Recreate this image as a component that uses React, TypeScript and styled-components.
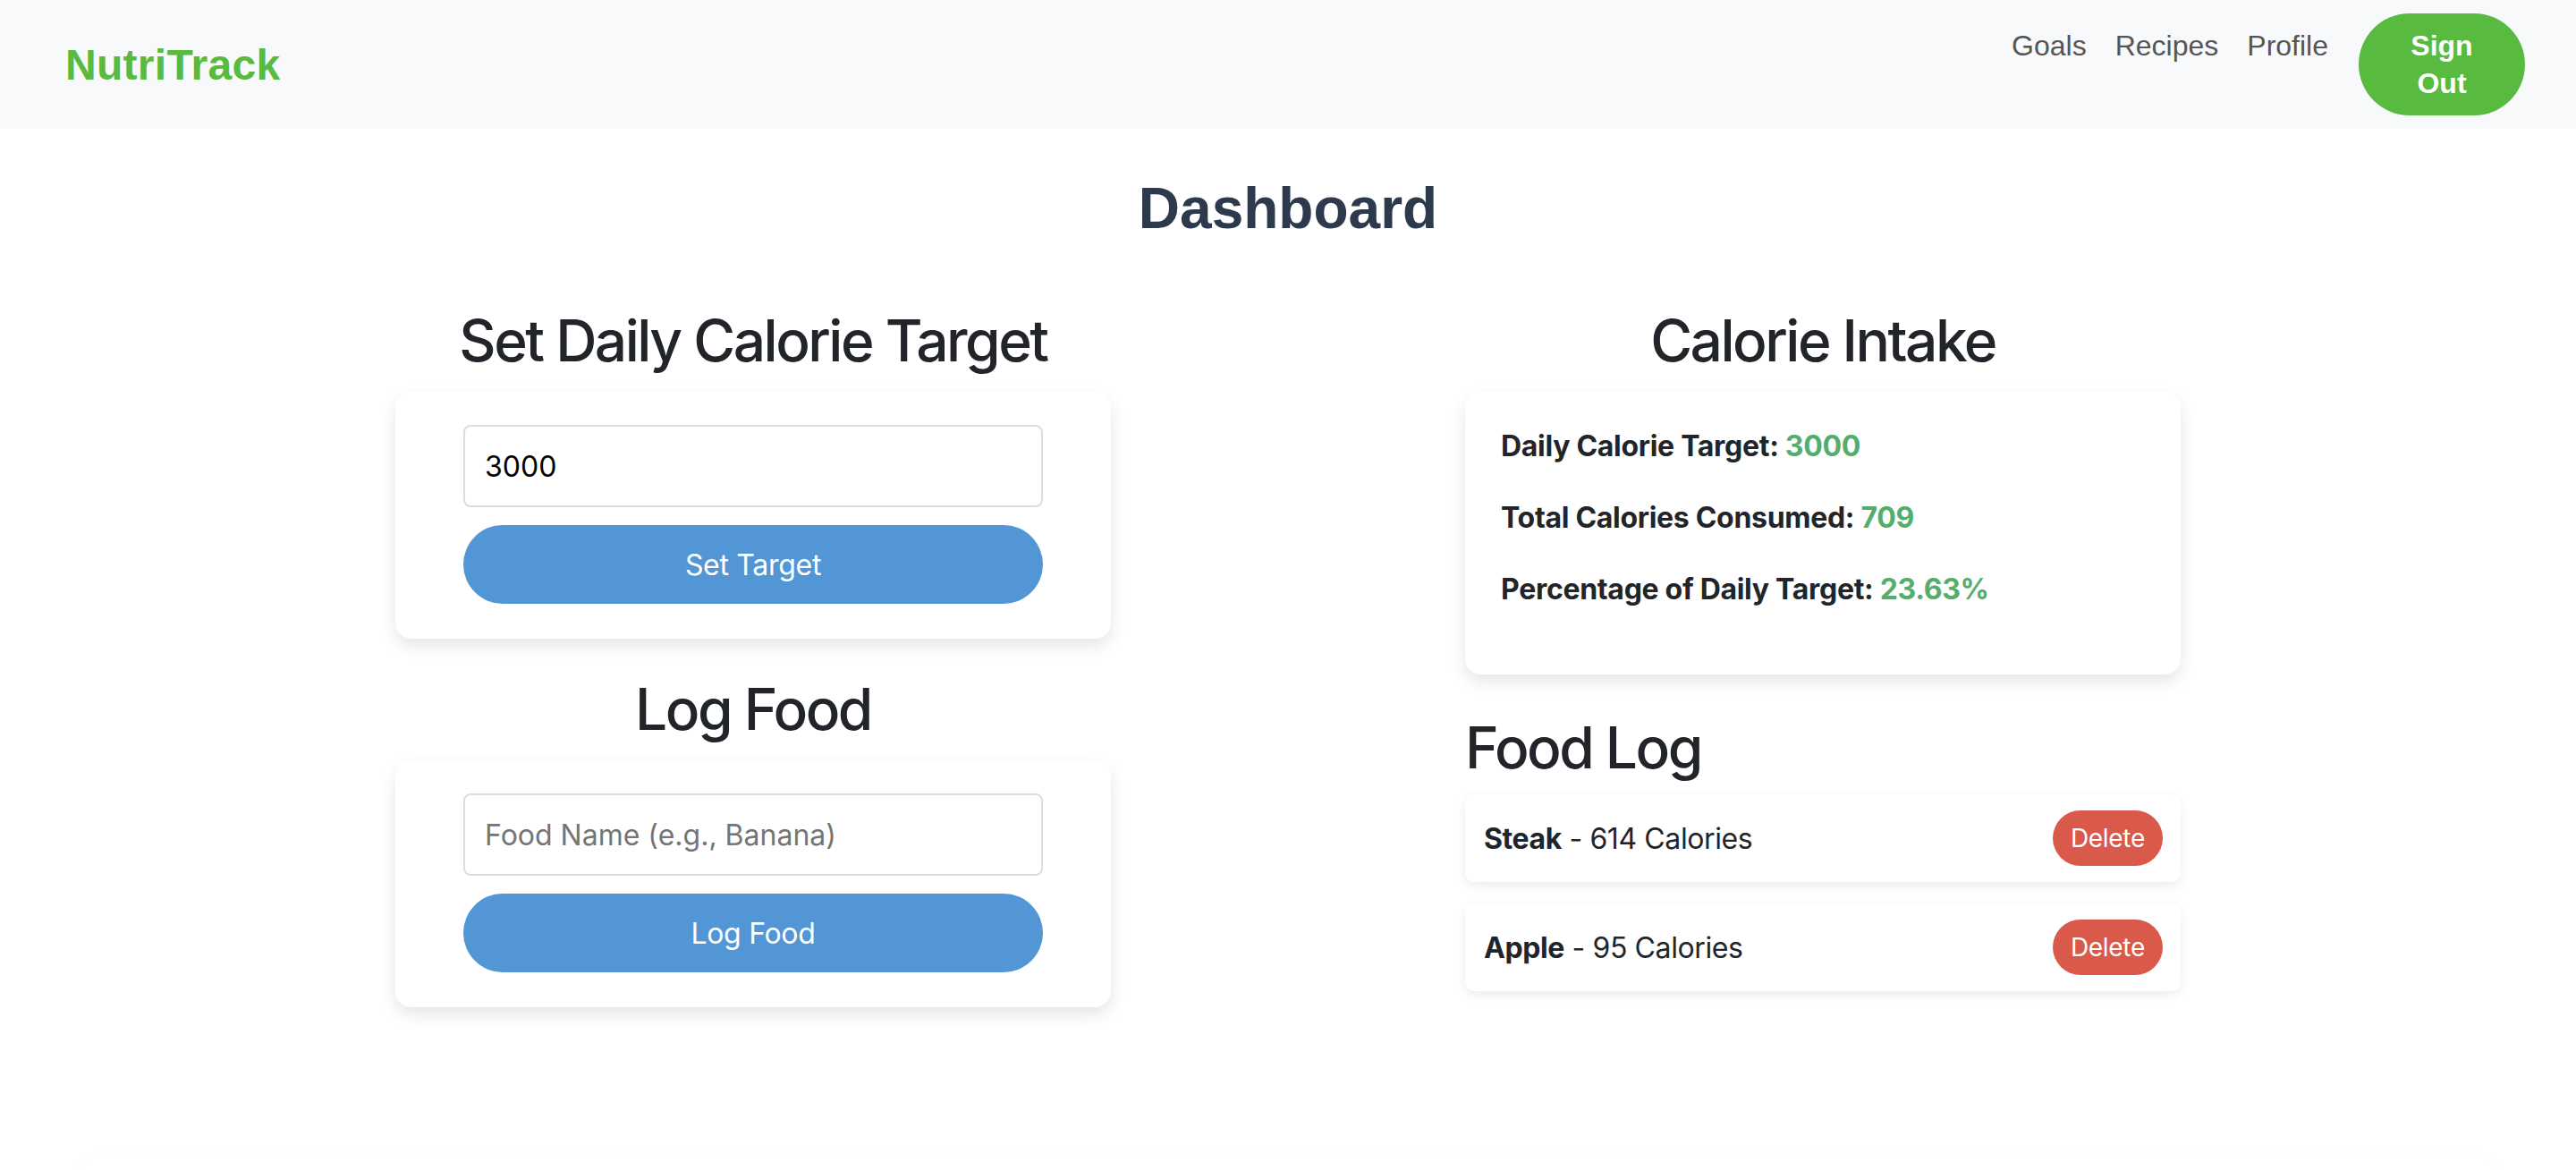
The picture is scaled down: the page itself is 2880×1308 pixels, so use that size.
import React from "react";
import styled, { createGlobalStyle } from "styled-components";

const SANS = `"Inter", "Noto Sans", "Liberation Sans", sans-serif`;
const ARIAL = `"Liberation Sans", Arial, sans-serif`;

const GlobalStyle = createGlobalStyle`
  html, body {
    margin: 0;
    padding: 0;
    background: #ffffff;
    font-family: ${SANS};
    color: #212529;
  }
  * { box-sizing: border-box; }
`;

const Page = styled.div`
  min-height: 1308px;
  overflow: hidden;
`;

const Header = styled.header`
  height: 144px;
  background: #f8f9fa;
  display: flex;
  align-items: center;
  justify-content: space-between;
  padding: 0 57px 0 73px;
`;

const Logo = styled.div`
  font-family: ${ARIAL};
  font-weight: 700;
  font-size: 48px;
  letter-spacing: 0.3px;
  color: #58ba3e;
`;

const Nav = styled.nav`
  display: flex;
  align-items: baseline;
  gap: 32px;
`;

const NavLink = styled.a`
  font-family: ${ARIAL};
  font-size: 32px;
  color: #555555;
  text-decoration: none;
`;

const SignOut = styled.button`
  width: 186px;
  height: 114px;
  border: none;
  border-radius: 57px;
  background: #58ba3e;
  color: #ffffff;
  font-family: ${ARIAL};
  font-weight: 700;
  font-size: 32px;
  line-height: 42px;
  padding: 0 40px;
  margin-left: 2px;
`;

const Main = styled.main`
  padding-top: 52px;
`;

const PageTitle = styled.h1`
  margin: 0;
  text-align: center;
  font-family: ${ARIAL};
  font-weight: 700;
  font-size: 64px;
  line-height: 74px;
  color: #2d3a4e;
`;

const Columns = styled.div`
  width: 1996px;
  margin: 72px auto 170px;
  display: flex;
  justify-content: space-between;
  align-items: flex-start;
`;

const Column = styled.section`
  width: 800px;
  display: flex;
  flex-direction: column;
`;

const SectionTitle = styled.h2<{ $align?: "left" | "center"; $gap: number; $top?: number }>`
  margin: ${(p) => p.$top ?? 0}px 0 ${(p) => p.$gap}px;
  font-family: ${SANS};
  font-weight: 500;
  font-size: 64px;
  line-height: 77px;
  letter-spacing: -2.5px;
  color: #212529;
  text-align: ${(p) => p.$align ?? "center"};
`;

const Card = styled.div`
  background: #ffffff;
  border-radius: 18px;
  box-shadow: 0 8px 18px rgba(0, 0, 0, 0.1);
`;

const FormCard = styled(Card)`
  padding: 37px 76px 39px;
  display: flex;
  flex-direction: column;
  gap: 20px;
`;

const TextInput = styled.input`
  width: 100%;
  height: 92px;
  border: 2px solid #dddddd;
  border-radius: 8px;
  padding: 0 22px;
  font-family: ${SANS};
  font-size: 32px;
  color: #000000;
  background: #ffffff;
  outline: none;
  &::placeholder {
    color: #757575;
  }
`;

const PrimaryButton = styled.button`
  width: 100%;
  height: 88px;
  border: none;
  border-radius: 44px;
  background: #5296d5;
  color: #ffffff;
  font-family: ${SANS};
  font-size: 32px;
  letter-spacing: -0.3px;
`;

const StatsCard = styled(Card)`
  padding: 37px 40px 71px;
  display: flex;
  flex-direction: column;
  gap: 32px;
`;

const StatLine = styled.p`
  margin: 0;
  font-size: 32px;
  line-height: 48px;
  font-weight: 700;
  letter-spacing: -0.3px;
  color: #212529;
`;

const StatValue = styled.span`
  color: #55ad6c;
`;

const FoodList = styled.div`
  display: flex;
  flex-direction: column;
  gap: 24px;
`;

const FoodRow = styled.div`
  background: #ffffff;
  border-radius: 10px;
  box-shadow: 0 4px 12px rgba(0, 0, 0, 0.08);
  padding: 18px 20px 18px 21px;
  display: flex;
  align-items: center;
  justify-content: space-between;
`;

const FoodText = styled.span`
  font-size: 32px;
  letter-spacing: -0.4px;
  color: #212529;
  strong {
    font-weight: 700;
  }
`;

const DeleteButton = styled.button`
  height: 62px;
  padding: 0 20px;
  border: none;
  border-radius: 31px;
  background: #d9594a;
  color: #ffffff;
  font-family: ${SANS};
  font-size: 28px;
  letter-spacing: -0.3px;
`;

const Footer = styled.footer`
  margin: 0 88px;
  height: 60px;
  background: #ffffff;
  border-radius: 16px;
  box-shadow: 0 -2px 14px rgba(0, 0, 0, 0.025);
`;

const foods = [
  { name: "Steak", calories: 614 },
  { name: "Apple", calories: 95 },
];

export default function App() {
  const target = 3000;
  const total = foods.reduce((s, f) => s + f.calories, 0);
  const pct = ((total / target) * 100).toFixed(2);

  return (
    <Page>
      <GlobalStyle />
      <Header>
        <Logo>NutriTrack</Logo>
        <Nav>
          <NavLink href="#">Goals</NavLink>
          <NavLink href="#">Recipes</NavLink>
          <NavLink href="#">Profile</NavLink>
          <SignOut>Sign Out</SignOut>
        </Nav>
      </Header>
      <Main>
        <PageTitle>Dashboard</PageTitle>
        <Columns>
          <Column>
            <SectionTitle $gap={19}>Set Daily Calorie Target</SectionTitle>
            <FormCard>
              <TextInput type="number" defaultValue={3000} />
              <PrimaryButton>Set Target</PrimaryButton>
            </FormCard>
            <SectionTitle $gap={19} $top={40}>Log Food</SectionTitle>
            <FormCard>
              <TextInput type="text" placeholder="Food Name (e.g., Banana)" />
              <PrimaryButton>Log Food</PrimaryButton>
            </FormCard>
          </Column>
          <Column>
            <SectionTitle $gap={19}>Calorie Intake</SectionTitle>
            <StatsCard>
              <StatLine>
                Daily Calorie Target: <StatValue>{target}</StatValue>
              </StatLine>
              <StatLine>
                Total Calories Consumed: <StatValue>{total}</StatValue>
              </StatLine>
              <StatLine>
                Percentage of Daily Target: <StatValue>{pct}%</StatValue>
              </StatLine>
            </StatsCard>
            <SectionTitle $align="left" $gap={14} $top={43}>Food Log</SectionTitle>
            <FoodList>
              {foods.map((f) => (
                <FoodRow key={f.name}>
                  <FoodText>
                    <strong>{f.name}</strong> - {f.calories} Calories
                  </FoodText>
                  <DeleteButton>Delete</DeleteButton>
                </FoodRow>
              ))}
            </FoodList>
          </Column>
        </Columns>
        <Footer />
      </Main>
    </Page>
  );
}
